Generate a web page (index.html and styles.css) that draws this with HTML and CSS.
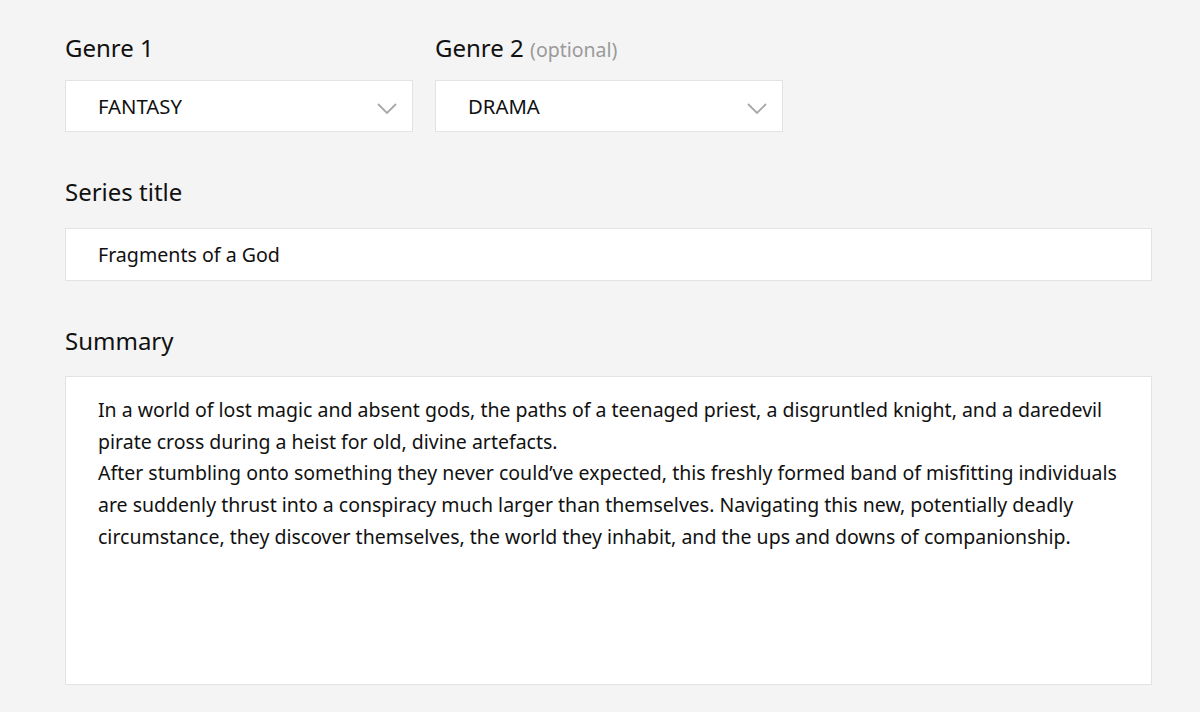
FILE: index.html
```html
<!DOCTYPE html>
<html>
<head>
<meta charset="utf-8">
<link rel="stylesheet" href="styles.css">
</head>
<body>
<div class="form">
  <div class="row">
    <div class="field genre">
      <div class="label">Genre 1</div>
      <div class="select">
        <span class="value">FANTASY</span>
        <svg class="chev" width="20" height="11" viewBox="0 0 20 11"><path d="M1 1 L10 10 L19 1" fill="none" stroke="#a8a8a8" stroke-width="1.8"/></svg>
      </div>
    </div>
    <div class="field genre">
      <div class="label">Genre 2 <span class="opt">(optional)</span></div>
      <div class="select">
        <span class="value">DRAMA</span>
        <svg class="chev" width="20" height="11" viewBox="0 0 20 11"><path d="M1 1 L10 10 L19 1" fill="none" stroke="#a8a8a8" stroke-width="1.8"/></svg>
      </div>
    </div>
  </div>
  <div class="field">
    <div class="label">Series title</div>
    <div class="input">Fragments of a God</div>
  </div>
  <div class="field">
    <div class="label">Summary</div>
    <div class="textarea">
      <p>In a world of lost magic and absent gods, the paths of a teenaged priest, a disgruntled knight, and a daredevil pirate cross during a heist for old, divine artefacts.</p>
      <p>After stumbling onto something they never could’ve expected, this freshly formed band of misfitting individuals are suddenly thrust into a conspiracy much larger than themselves. Navigating this new, potentially deadly circumstance, they discover themselves, the world they inhabit, and the ups and downs of companionship.</p>
    </div>
  </div>
</div>
</body>
</html>
```
FILE: styles.css
```css
html, body {
  margin: 0;
  padding: 0;
  background: #f4f4f4;
}
body {
  font-family: "Noto Sans", "Open Sans", sans-serif;
  color: #111;
}
.form {
  padding: 32px 48px 0 65px;
  display: flex;
  flex-direction: column;
  gap: 44px;
}
.row {
  display: flex;
  gap: 22px;
}
.field {
  display: flex;
  flex-direction: column;
}
.genre {
  width: 348px;
}
.label {
  font-size: 24px;
  line-height: 32px;
  height: 32px;
  margin-bottom: 16px;
}
.opt {
  font-size: 19.5px;
  line-height: 0;
  color: #9a9a9a;
}
.select {
  box-sizing: border-box;
  height: 52px;
  background: #fff;
  border: 1px solid #e3e3e3;
  display: flex;
  align-items: center;
  justify-content: space-between;
  padding: 0 15px 0 32px;
}
.value {
  font-size: 20.3px;
}
.chev {
  display: block;
  margin-top: 4px;
}
.input {
  box-sizing: border-box;
  height: 53px;
  width: 1087px;
  background: #fff;
  border: 1px solid #e3e3e3;
  display: flex;
  align-items: center;
  padding: 0 32px;
  font-size: 19.6px;
  margin-top: 4px;
}
.textarea {
  box-sizing: border-box;
  width: 1087px;
  height: 309px;
  background: #fff;
  border: 1px solid #e3e3e3;
  padding: 17px 28px 16px 32px;
  font-size: 19.5px;
  line-height: 31.7px;
  margin-top: 3px;
}
.textarea p {
  margin: 0;
}
```
